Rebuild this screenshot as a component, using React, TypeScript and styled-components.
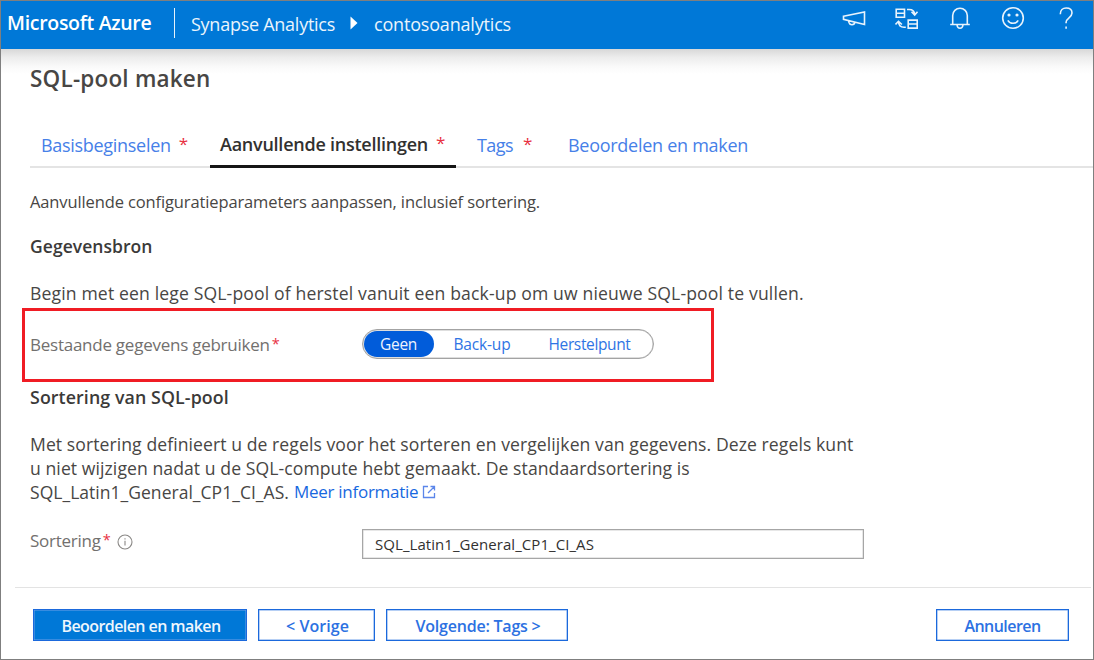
import React from 'react';
import styled, { createGlobalStyle } from 'styled-components';

const GlobalStyle = createGlobalStyle`
  *, *::before, *::after { box-sizing: border-box; }
  html, body { margin: 0; padding: 0; }
  body { background: #fff; overflow: hidden; }
`;

const Frame = styled.div`
  display: flex;
  flex-direction: column;
  width: 1094px;
  height: 660px;
  border: 1px solid #7f7f7f;
  background: #fff;
  font-family: 'Open Sans', 'Noto Sans', sans-serif;
  color: #484644;
`;

const Text = styled.span<{ $size: number; $spacing?: number; $weight?: number }>`
  font-size: ${(p) => p.$size}px;
  letter-spacing: ${(p) => p.$spacing ?? 0}px;
  font-weight: ${(p) => p.$weight ?? 400};
  white-space: nowrap;
`;

/* Top bar */
const TopBar = styled.header`
  display: flex;
  align-items: center;
  flex: none;
  height: 48px;
  padding: 0 15px 0 6px;
  background: #0078d7;
  color: #fff;
`;

const Brand = styled(Text)`
  width: 167px;
  padding-bottom: 5px;
`;

const BrandDivider = styled.span`
  width: 1px;
  height: 30px;
  margin-right: 16px;
  margin-bottom: 5px;
  background: #e6f2fb;
`;

const Crumb = styled(Text)`
  padding-bottom: 2px;
  color: #eaf4fc;
`;

const CrumbArrow = styled.svg`
  width: 8px;
  height: 14px;
  margin: 0 16px 5px 15px;
  fill: #fff;
`;

const TopIcons = styled.div`
  display: flex;
  align-items: center;
  gap: 29px;
  margin-left: auto;
  padding-bottom: 14px;

  svg {
    width: 24px;
    height: 24px;
    fill: none;
    stroke: #e8f3fc;
    stroke-width: 1.6;
  }
`;

/* Content */
const Content = styled.main`
  display: flex;
  flex-direction: column;
  flex: 1;
  padding-left: 29px;
  background: linear-gradient(#d8d8d8, #ececec 8px, #fafafa 18px, #fff 25px) no-repeat;
`;

const TitleRow = styled.div`
  display: flex;
  align-items: center;
  height: 57px;
  padding-top: 1px;
`;

const TabBar = styled.nav`
  display: flex;
  align-items: flex-end;
  height: 62px;
  border-bottom: 2px solid #e4e4e4;
`;

const Tab = styled.div<{ $width?: number; $indent: number; $active?: boolean }>`
  display: flex;
  align-items: center;
  gap: 8px;
  width: ${(p) => (p.$width ? `${p.$width}px` : 'auto')};
  height: 43px;
  margin-bottom: -2px;
  padding-left: ${(p) => p.$indent}px;
  border-bottom: ${(p) => (p.$active ? '3px solid #151515' : 'none')};
  padding-bottom: ${(p) => (p.$active ? 3 : 4)}px;
  color: ${(p) => (p.$active ? '#323130' : '#4680e8')};
`;

const TabRequired = styled.span`
  padding-bottom: 3px;
  font-size: 17px;
  color: #e8303f;
`;

const Required = styled.span`
  margin-left: 2px;
  padding-bottom: 2px;
  font-size: 14.5px;
  color: #e8303f;
`;

const Intro = styled.div`
  display: flex;
  align-items: center;
  height: 67px;
`;

const SectionTitle = styled.h2<{ $height: number }>`
  display: flex;
  align-items: center;
  height: ${(p) => p.$height}px;
  margin: 0;
  padding-bottom: 1px;
  color: #3b3a39;
`;

const SourceNote = styled.div`
  display: flex;
  align-items: center;
  height: 30px;
  margin-top: 20px;
`;

const Highlight = styled.div`
  display: flex;
  align-items: center;
  width: 692px;
  height: 74px;
  margin-left: -8px;
  padding-left: 5px;
  border: 3px solid #f01c24;
`;

const Label = styled.div<{ $width: number }>`
  display: flex;
  align-items: center;
  width: ${(p) => p.$width}px;
  padding-bottom: 2px;
  color: #72706e;
`;

const Segmented = styled.div`
  display: flex;
  align-items: center;
  width: 292px;
  height: 30px;
  margin-bottom: 2px;
  padding: 0 1px;
  border: 1px solid #a3a3a3;
  border-radius: 15px;
  box-shadow: inset 0 0 0 0.5px #bdbdbd;
`;

const Segment = styled.div<{ $width: number; $on?: boolean }>`
  display: flex;
  align-items: center;
  justify-content: center;
  width: ${(p) => p.$width}px;
  height: 26px;
  padding-right: 1px;
  border-radius: 13px;
  background: ${(p) => (p.$on ? '#015cda' : 'transparent')};
  color: ${(p) => (p.$on ? '#eef4fd' : '#2f74e4')};
`;

const Paragraph = styled.p`
  display: flex;
  flex-direction: column;
  margin: 19px 0 0;
`;

const Line = styled.span`
  display: flex;
  align-items: center;
  height: 24px;
`;

const Link = styled(Text)`
  margin-left: 5px;
  padding-bottom: 1px;
  color: #1768e0;
`;

const ExternalIcon = styled.svg`
  width: 14px;
  height: 14px;
  margin-left: 4px;
  fill: none;
  stroke: #5b86ea;
  stroke-width: 1.3;
`;

const Field = styled.div`
  display: flex;
  height: 30px;
  margin-top: 25px;
`;

const InfoIcon = styled.svg`
  width: 16px;
  height: 16px;
  margin: 3px 0 0 6px;
  fill: none;
  stroke: #8a8886;
  stroke-width: 1.1;
`;

const FieldLabel = styled(Label)`
  height: 25px;
`;

const Input = styled.div`
  display: flex;
  align-items: center;
  width: 502px;
  height: 30px;
  padding: 0 0 1px 12px;
  border: 1px solid #a6a6a6;
  box-shadow: inset 0 0 0 0.5px #d0d0d0;
  color: #323130;
`;

/* Footer */
const Footer = styled.footer`
  display: flex;
  align-items: flex-start;
  flex: none;
  gap: 11px;
  height: 72px;
  margin: 0 2px 0 14px;
  padding: 21px 22px 0 18px;
  border-top: 1px solid #e3e3e3;
`;

const Button = styled.div<{ $width: number; $primary?: boolean; $last?: boolean }>`
  display: flex;
  align-items: center;
  justify-content: center;
  width: ${(p) => p.$width}px;
  height: 32px;
  margin-left: ${(p) => (p.$last ? 'auto' : 0)};
  padding: ${(p) => (p.$last ? '1px 0 0' : '1px 0 0 2px')};
  border: 1px solid #1b69dc;
  box-shadow: inset 0 0 0 0.5px #6fa0ea;
  background: ${(p) => (p.$primary ? '#0078d7' : '#fff')};
  color: ${(p) => (p.$primary ? '#eef6fd' : '#2c71e2')};
`;

const MegaphoneIcon = () => (
  <svg viewBox="0 0 24 24">
    <path d="M1.5 10.2 22.5 6v12.6L1.5 13.4zM6.5 14.8l.6 1.9c.6 1.7 1.6 2.1 3 2 1.7-.2 2.7-1.2 3-2.4" />
  </svg>
);

const SwitchIcon = () => (
  <svg viewBox="0 0 24 24">
    <path d="M1.2 3.2h8.3v8H1.2zM1.2 7.2h8.3M13.2 14.1h9v8h-9zM13.2 18h9M12 3.5h2c3.500 0 5.500 1.500 5.700 5M16.500 5.800l3.200 3.200 2.800-3.200M10.800 21.200H9c-3.500 0-5.300-1.700-5.500-5.500M.5 18.500l3-3.200 3.400 3.200" />
  </svg>
);

const BellIcon = () => (
  <svg viewBox="0 0 24 24">
    <path d="M4.7 18V9.500a7.300 7.300 0 0 1 14.600 0V18M2.200 18.500h19.600M9 19c.3 2 1.400 3.200 3 3.200s2.700-1.200 3-3.200" />
  </svg>
);

const SmileIcon = () => (
  <svg viewBox="0 0 24 24">
    <circle cx="12" cy="12" r="10.3" />
    <path d="M6.8 14.3c1.200 2 3 3 5.200 3s4-1 5.200-3" />
    <circle cx="8" cy="9" r="0.8" />
    <circle cx="16" cy="9" r="0.8" />
  </svg>
);

const HelpIcon = () => (
  <svg viewBox="0 0 24 24">
    <path d="M6.3 8.200C6.300 4.300 8.800 2 12.200 2c3.500 0 5.800 2 5.800 5 0 4.500-5.900 5-5.900 9.300v1M12.100 20.500v2.200" />
  </svg>
);

export default function App() {
  return (
    <>
      <GlobalStyle />
      <Frame>
        <TopBar>
          <Brand $size={19.5} $spacing={-0.3} $weight={600}>Microsoft Azure</Brand>
          <BrandDivider />
          <Crumb $size={18} $spacing={-0.262}>Synapse Analytics</Crumb>
          <CrumbArrow viewBox="0 0 8 14"><path d="M0.5 0.5 7.5 7l-7 6.5z" /></CrumbArrow>
          <Crumb $size={18} $spacing={-0.182}>contosoanalytics</Crumb>
          <TopIcons>
            <MegaphoneIcon />
            <SwitchIcon />
            <BellIcon />
            <SmileIcon />
            <HelpIcon />
          </TopIcons>
        </TopBar>

        <Content>
          <TitleRow>
            <Text $size={22.5} $spacing={0.193} $weight={600}>SQL-pool maken</Text>
          </TitleRow>

          <TabBar>
            <Tab $width={180} $indent={11}>
              <Text $size={18} $spacing={-0.3}>Basisbeginselen</Text>
              <TabRequired>*</TabRequired>
            </Tab>
            <Tab $width={246} $indent={10} $active>
              <Text $size={18} $spacing={-0.246} $weight={600}>Aanvullende instellingen</Text>
              <TabRequired>*</TabRequired>
            </Tab>
            <Tab $width={101} $indent={21}>
              <Text $size={18} $spacing={-0.567}>Tags&nbsp;</Text>
              <TabRequired as={TagsRequired}>*</TabRequired>
            </Tab>
            <Tab $indent={11}>
              <Text $size={18} $spacing={-0.28}>Beoordelen en maken</Text>
            </Tab>
          </TabBar>

          <Intro>
            <Text $size={16.5} $spacing={-0.124}>
              Aanvullende configuratieparameters aanpassen, inclusief sortering.
            </Text>
          </Intro>

          <SectionTitle $height={23}>
            <Text $size={17.5} $spacing={0.052} $weight={600}>Gegevensbron</Text>
          </SectionTitle>
          <SourceNote>
            <Text $size={17.6} $spacing={0.139}>
              Begin met een lege SQL-pool of herstel vanuit een back-up om uw nieuwe SQL-pool te vullen.
            </Text>
          </SourceNote>

          <Highlight>
            <Label $width={332}>
              <Text $size={17} $spacing={-0.25}>Bestaande gegevens gebruiken</Text>
              <Required>*</Required>
            </Label>
            <Segmented>
              <Segment $width={70} $on>
                <Text $size={15.5} $spacing={-0.296}>Geen</Text>
              </Segment>
              <Segment $width={97}>
                <Text $size={15.5} $spacing={-0.167}>Back-up</Text>
              </Segment>
              <Segment $width={118}>
                <Text $size={15.5} $spacing={-0.365}>Herstelpunt</Text>
              </Segment>
            </Segmented>
          </Highlight>

          <SectionTitle $height={31}>
            <Text $size={17.8} $spacing={0.1} $weight={600}>Sortering van SQL-pool</Text>
          </SectionTitle>
          <Paragraph>
            <Line>
              <Text $size={17.6} $spacing={0.07}>
                Met sortering definieert u de regels voor het sorteren en vergelijken van gegevens. Deze regels kunt
              </Text>
            </Line>
            <Line>
              <Text $size={17.6} $spacing={0.072}>
                u niet wijzigen nadat u de SQL-compute hebt gemaakt. De standaardsortering is
              </Text>
            </Line>
            <Line>
              <Text $size={17.5} $spacing={0.03}>SQL_Latin1_General_CP1_CI_AS.</Text>
              <Link $size={17} $spacing={-0.27}>Meer informatie</Link>
              <ExternalIcon viewBox="0 0 14 14">
                <path d="M6 1.5H1.500v11h11V8M8.500 1.500h4v4M12.500 1.500 6 8" />
              </ExternalIcon>
            </Line>
          </Paragraph>

          <Field>
            <FieldLabel $width={332}>
              <Text $size={17} $spacing={-0.25}>Sortering</Text>
              <Required>*</Required>
              <InfoIcon viewBox="0 0 16 16">
                <circle cx="8" cy="8" r="7" />
                <path d="M8 6.800v4.700M8 4.200v1.300" />
              </InfoIcon>
            </FieldLabel>
            <Input>
              <Text $size={15} $spacing={0.06}>SQL_Latin1_General_CP1_CI_AS</Text>
            </Input>
          </Field>
        </Content>

        <Footer>
          <Button $width={214} $primary>
            <Text $size={16} $spacing={-0.58} $weight={600}>Beoordelen en maken</Text>
          </Button>
          <Button $width={117}>
            <Text $size={16} $spacing={0.063} $weight={600}>&lt; Vorige</Text>
          </Button>
          <Button $width={182}>
            <Text $size={16} $spacing={-0.215} $weight={600}>Volgende: Tags &gt;</Text>
          </Button>
          <Button $width={133} $last>
            <Text $size={16} $spacing={-0.56} $weight={600}>Annuleren</Text>
          </Button>
        </Footer>
      </Frame>
    </>
  );
}

const TagsRequired = styled.span`
  margin-left: -2px;
`;
